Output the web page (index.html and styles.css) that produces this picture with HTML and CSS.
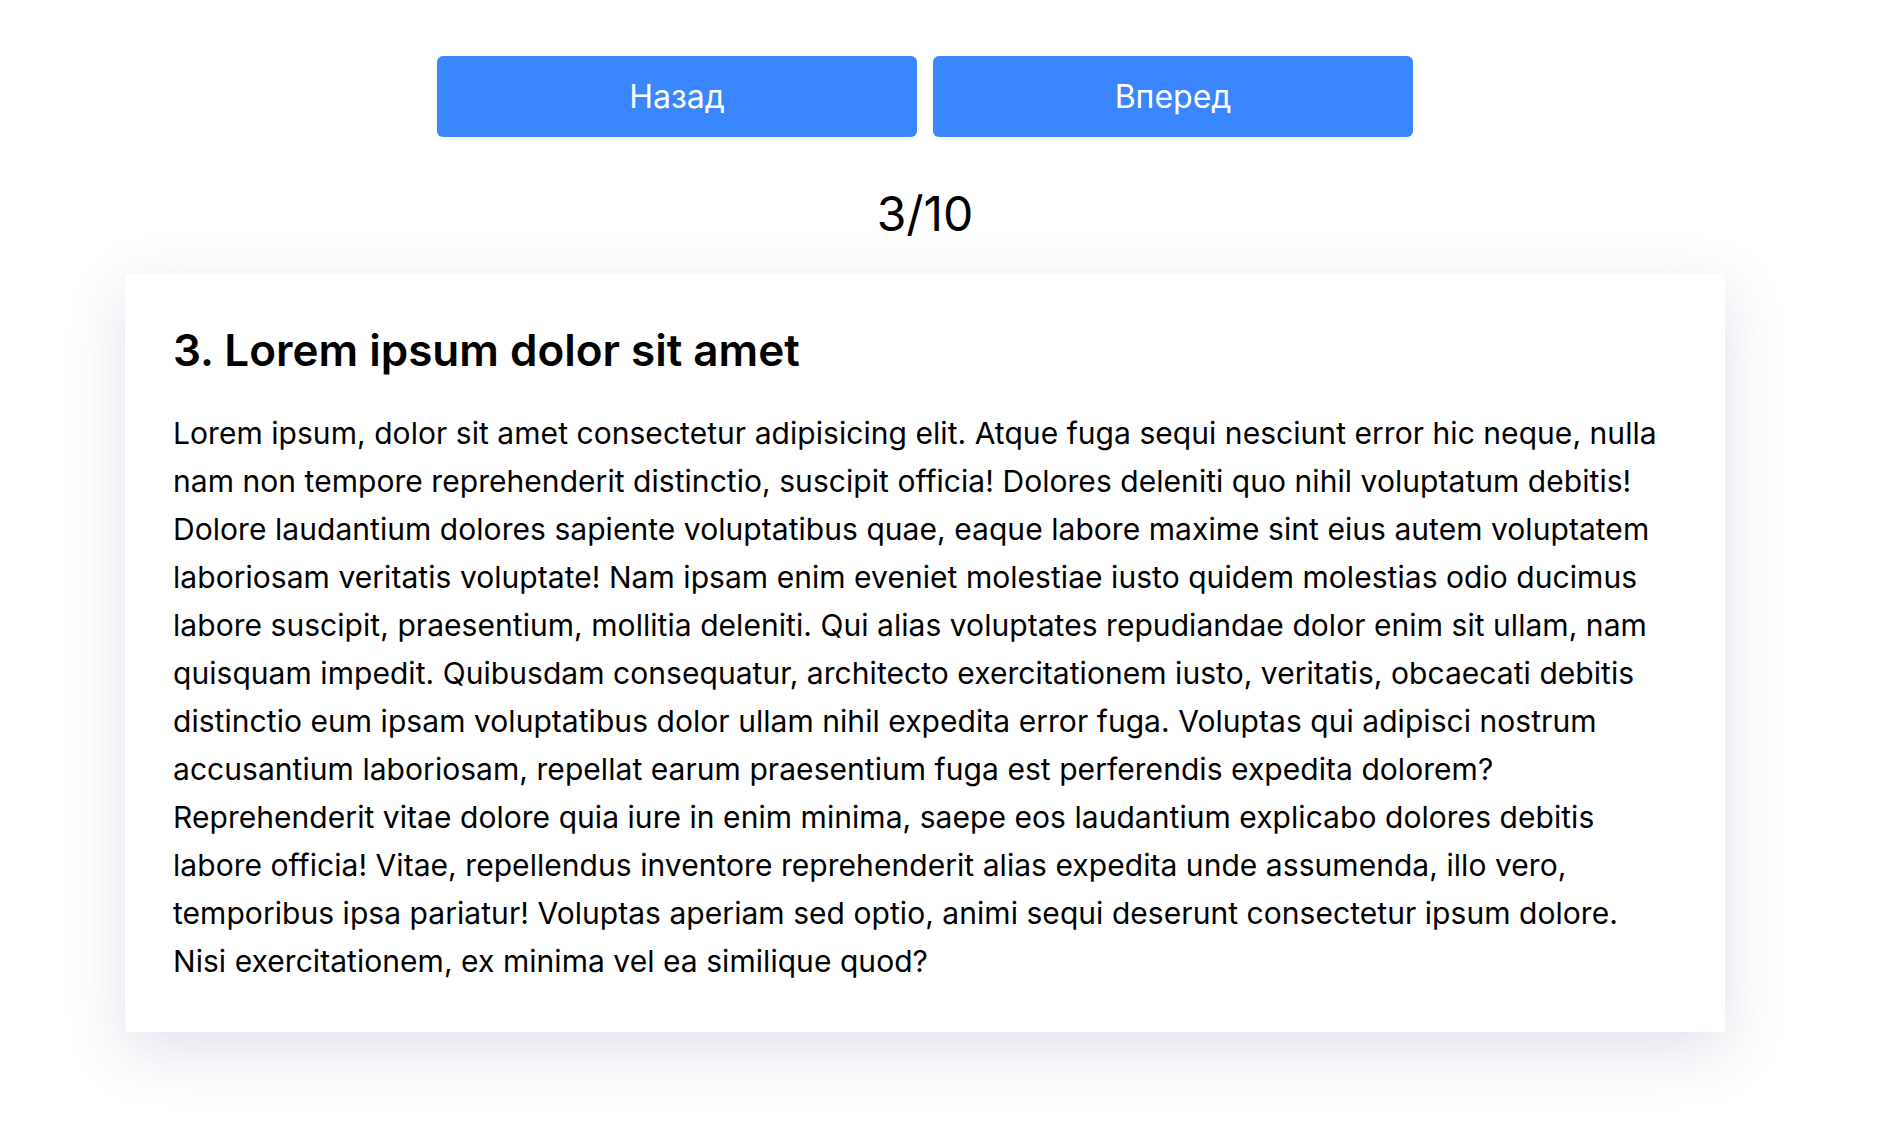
FILE: index.html
```html
<!DOCTYPE html>
<html lang="ru">
<head>
<meta charset="utf-8">
<title>Slider</title>
<link rel="stylesheet" href="styles.css">
</head>
<body>
<div class="page">
  <div class="controls">
    <button class="btn">Назад</button>
    <button class="btn">Вперед</button>
  </div>
  <div class="counter">3/10</div>
  <article class="card">
    <h2 class="card-title">3. Lorem ipsum dolor sit amet</h2>
    <p class="card-text">Lorem ipsum, dolor sit amet consectetur adipisicing elit. Atque fuga sequi nesciunt error hic neque, nulla nam non tempore reprehenderit distinctio, suscipit officia! Dolores deleniti quo nihil voluptatum debitis! Dolore laudantium dolores sapiente voluptatibus quae, eaque labore maxime sint eius autem voluptatem laboriosam veritatis voluptate! Nam ipsam enim eveniet molestiae iusto quidem molestias odio ducimus labore suscipit, praesentium, mollitia deleniti. Qui alias voluptates repudiandae dolor enim sit ullam, nam quisquam impedit. Quibusdam consequatur, architecto exercitationem iusto, veritatis, obcaecati debitis distinctio eum ipsam voluptatibus dolor ullam nihil expedita error fuga. Voluptas qui adipisci nostrum accusantium laboriosam, repellat earum praesentium fuga est perferendis expedita dolorem? Reprehenderit vitae dolore quia iure in enim minima, saepe eos laudantium explicabo dolores debitis labore officia! Vitae, repellendus inventore reprehenderit alias expedita unde assumenda, illo vero, temporibus ipsa pariatur! Voluptas aperiam sed optio, animi sequi deserunt consectetur ipsum dolore. Nisi exercitationem, ex minima vel ea similique quod?</p>
  </article>
</div>
</body>
</html>
```

FILE: styles.css
```css
* { box-sizing: border-box; }
html, body { margin: 0; padding: 0; background: #fff; }
body {
  font-family: Inter, "Noto Sans", "Liberation Sans", sans-serif;
  color: #000;
}
.page {
  width: 1850px;
  display: flex;
  flex-direction: column;
  align-items: center;
  padding: 56px 0 110px;
}
.controls {
  display: flex;
  gap: 16px;
}
.btn {
  width: 480px;
  height: 81px;
  border: none;
  border-radius: 6px;
  background: #3a86ff;
  color: #fff;
  font-family: Inter, "Noto Sans", sans-serif;
  font-size: 32px;
  font-weight: 400;
  cursor: pointer;
}
.counter {
  margin-top: 48px;
  font-size: 48px;
  line-height: 58px;
  font-weight: 400;
}
.card {
  margin-top: 31px;
  width: 1600px;
  background: #fff;
  border-radius: 4px;
  padding: 48px 48px 47px;
  box-shadow: 0 18px 60px rgba(62, 76, 130, 0.16);
}
.card-title {
  margin: 0 0 31px;
  font-size: 44px;
  line-height: 56px;
  font-weight: 600;
  letter-spacing: 0;
}
.card-text {
  margin: 0;
  font-size: 30px;
  line-height: 48px;
  font-weight: 400;
  letter-spacing: 0.05px;
}
```
